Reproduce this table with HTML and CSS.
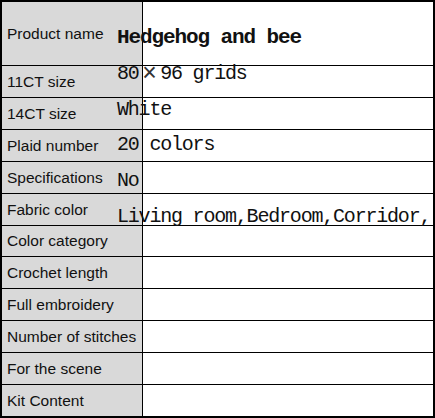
FILE: index.html
```html
<!DOCTYPE html>
<html>
<head>
<meta charset="utf-8">
<link rel="stylesheet" href="styles.css">
</head>
<body>
<div class="sheet">
  <div class="table">
    <div class="label first">Product name</div><div class="value first"></div>
    <div class="label">11CT size</div><div class="value"></div>
    <div class="label">14CT size</div><div class="value"></div>
    <div class="label">Plaid number</div><div class="value"></div>
    <div class="label">Specifications</div><div class="value"></div>
    <div class="label">Fabric color</div><div class="value"></div>
    <div class="label">Color category</div><div class="value"></div>
    <div class="label">Crochet length</div><div class="value"></div>
    <div class="label">Full embroidery</div><div class="value"></div>
    <div class="label">Number of stitches</div><div class="value"></div>
    <div class="label">For the scene</div><div class="value"></div>
    <div class="label">Kit Content</div><div class="value"></div>
  </div>
  <div class="overlay"><div class="line bold">Hedgehog and bee</div><div class="line">80<span class="wide">×</span>96 grids</div><div class="line">White</div><div class="line">20 colors</div><div class="line">No</div><div class="line">Living room,Bedroom,Corridor,</div></div>
</div>
</body>
</html>
```
FILE: styles.css
```css
html, body {
  margin: 0;
  padding: 0;
  background: #ffffff;
}
.sheet {
  box-sizing: border-box;
  width: 435px;
  height: 418px;
  border: 2px solid #000;
  display: grid;
  grid-template-columns: 1fr;
  grid-template-rows: 1fr;
  overflow: hidden;
}
.table {
  grid-area: 1 / 1;
  display: grid;
  grid-template-columns: 141px 1fr;
  grid-template-rows: 63px repeat(11, 1fr);
}
.label {
  background: #d9d9d9;
  border-top: 1px solid #000;
  border-right: 1px solid #000;
  font-family: "Liberation Sans", Arial, sans-serif;
  font-size: 15.5px;
  color: #111;
  display: flex;
  align-items: center;
  padding-left: 5px;
  padding-top: 1px;
  white-space: nowrap;
}
.value {
  background: #fff;
  border-top: 1px solid #000;
}
.label.first, .value.first {
  border-top: none;
}
.overlay {
  grid-area: 1 / 1;
  align-self: start;
  justify-self: start;
  margin-left: 115px;
  margin-top: 18px;
  position: relative;
  z-index: 1;
  font-family: "Liberation Mono", "Courier New", monospace;
  font-size: 20px;
  letter-spacing: -1.2px;
  line-height: 35.8px;
  color: #111;
  white-space: pre;
}
.line.bold {
  font-weight: bold;
  font-size: 21px;
  letter-spacing: -1.1px;
}
.wide {
  display: inline-block;
  width: 21.6px;
  text-align: center;
  letter-spacing: 0;
  font-size: 25px;
  line-height: 0;
  vertical-align: -2px;
  color: #333;
}
```
